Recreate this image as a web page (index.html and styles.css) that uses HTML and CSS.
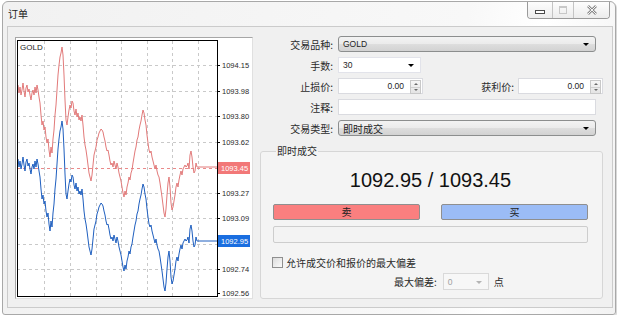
FILE: index.html
```html
<!DOCTYPE html>
<html lang="zh-CN">
<head>
    <meta charset="UTF-8">
    <title>订单</title>
    <link rel="stylesheet" href="styles.css">
</head>
<body>
    <div class="window">
        <div class="titlebar">
            <span class="title">订单</span>
            <div class="caption-buttons">
                <span class="cap-btn cap-min"><i></i></span>
                <span class="cap-btn cap-max"><i></i></span>
                <span class="cap-btn cap-close">
                    <svg width="14" height="10" viewBox="0 0 14 10">
                        <path d="M3 1 L11 9 M11 1 L3 9" stroke="#8a8a8a" stroke-width="2.6" fill="none"/>
                        <path d="M3 1 L11 9 M11 1 L3 9" stroke="#f4f4f4" stroke-width="1" fill="none"/>
                    </svg>
                </span>
            </div>
        </div>

        <div class="client">
            <div class="chart">
                <svg width="236" height="260" viewBox="16 39 236 260">
                    <defs>
                        <clipPath id="plot"><rect x="18" y="42" width="199" height="255"/></clipPath>
                        <polyline id="ticks" fill="none" points="18,160 19,168 20,162 21,170 22,165 23,158 24,166 25,172 26,163 27,160 28,167 29,164 30,170 31,175 32,168 33,165 34,170 35,162 36,168 37,160 38,165 39,172 40,178 41,190 42,200 43,196 44,205 45,202 46,212 47,218 48,214 49,225 50,232 51,222 52,228 53,214 54,205 55,190 56,180 57,165 58,150 59,140 60,132 61,128 62,122 63,130 64,150 65,175 66,195 67,200 68,192 69,185 70,180 71,183 72,176 73,178 74,186 75,190 76,184 77,192 78,188 79,195 80,192 81,196 82,190 83,200 84,212 85,220 86,225 87,232 88,240 89,248 90,252 91,256 92,250 93,240 94,230 95,226 96,222 97,215 98,212 99,208 100,206 101,204 102,205 103,207 104,212 105,216 106,222 107,226 108,225 109,230 110,236 111,240 112,238 113,242 114,236 115,240 116,244 117,238 118,242 119,248 120,252 121,256 122,262 123,268 124,272 125,266 126,270 127,262 128,258 129,252 130,255 131,248 132,245 133,238 134,232 135,226 136,222 137,215 138,212 139,205 140,200 141,196 142,190 143,185 144,188 145,195 146,200 147,210 148,218 149,225 150,228 151,226 152,232 153,236 154,240 155,244 156,240 157,246 158,250 159,252 160,258 161,265 162,272 163,280 164,288 165,292 166,284 167,270 168,258 169,252 170,262 171,278 172,285 173,282 174,276 175,270 176,262 177,258 178,262 179,255 180,250 181,246 182,250 183,244 184,242 185,240 186,242 187,241 188,238 189,244 190,230 191,226 192,232 193,242 194,248 195,246 196,238 197,242 217,242"/>
                    </defs>

                    <rect class="plot-bg" x="17.5" y="41.5" width="200" height="256"/>

                    <g class="grid">
                        <path d="M17 66.5H217 M17 92.5H217 M17 117.5H217 M17 143.5H217 M17 194.5H217 M17 219.5H217 M17 245.5H217 M17 270.5H217"/>
                        <path d="M44.5 42V297 M70.5 42V297 M96.5 42V297 M121.5 42V297 M147.5 42V297 M172.5 42V297 M198.5 42V297"/>
                    </g>
                    <path class="ask-level" d="M17 169.5H217"/>

                    <g clip-path="url(#plot)">
                        <use href="#ticks" class="ask" transform="translate(0 -74)"/>
                        <use href="#ticks" class="bid"/>
                    </g>

                    <rect class="plot-frame" x="17.5" y="41.5" width="200" height="256"/>
                    <path class="axis-ticks" d="M217 66.5h3 M217 92.5h3 M217 117.5h3 M217 143.5h3 M217 194.5h3 M217 219.5h3 M217 270.5h3 M217 294.5h3"/>

                    <text class="symbol" x="20" y="51">GOLD</text>

                    <g class="price-labels">
                        <text x="222" y="69">1094.15</text>
                        <text x="222" y="95">1093.98</text>
                        <text x="222" y="120">1093.80</text>
                        <text x="222" y="146">1093.62</text>
                        <text x="222" y="197">1093.27</text>
                        <text x="222" y="222">1093.09</text>
                        <text x="222" y="273">1092.74</text>
                        <text x="222" y="297">1092.56</text>
                    </g>

                    <rect class="tag-ask" x="218" y="163" width="32" height="12"/>
                    <text class="tag-text" x="221" y="172">1093.45</text>
                    <rect class="tag-bid" x="218" y="236" width="32" height="12"/>
                    <text class="tag-text" x="221" y="245">1092.95</text>
                </svg>
            </div>

            <div class="order">
                <div class="row">
                    <label>交易品种:</label>
                    <div class="combo wide">GOLD<span class="arrow"></span></div>
                </div>
                <div class="row">
                    <label>手数:</label>
                    <div class="combo editable lots">30<span class="arrow"></span></div>
                </div>
                <div class="row">
                    <label>止损价:</label>
                    <div class="spin">0.00<span class="spin-btns"><i class="up"></i><i class="down"></i></span></div>
                    <label class="grow">获利价:</label>
                    <div class="spin">0.00<span class="spin-btns"><i class="up"></i><i class="down"></i></span></div>
                </div>
                <div class="row">
                    <label>注释:</label>
                    <div class="text-input"></div>
                </div>
                <div class="row">
                    <label>交易类型:</label>
                    <div class="combo wide cjk">即时成交<span class="arrow"></span></div>
                </div>

                <fieldset class="market">
                    <legend>即时成交</legend>
                    <div class="quote">1092.95 / 1093.45</div>
                    <div class="trade-buttons">
                        <button class="sell">卖</button>
                        <button class="buy">买</button>
                    </div>
                    <div class="status"></div>
                    <div class="check-row">
                        <span class="checkbox"></span>
                        <span>允许成交价和报价的最大偏差</span>
                    </div>
                    <div class="deviation-row">
                        <label>最大偏差:</label>
                        <div class="combo disabled">0<span class="arrow"></span></div>
                        <span class="unit">点</span>
                    </div>
                </fieldset>
            </div>
        </div>
    </div>
</body>
</html>
```

FILE: styles.css
```css
body {
    margin: 0;
    background: #ffffff;
    font-family: "Liberation Sans", "Noto Sans CJK SC", sans-serif;
    font-size: 10px;
    color: #1e1e1e;
}
.window {
    margin: 1px 4px 0 2px;
    height: 309px;
    border: 1px solid #a8a8a8;
    border-radius: 6px 6px 3px 3px;
    background: linear-gradient(100deg, #f1f1f1 0%, #f8f8f8 70%, #ffffff 82%, #f2f2f2 100%);
    padding: 0 2px 3px 4px;
    box-shadow: 1px 1px 0 #d8d8d8;
}
.titlebar {
    height: 24px;
    display: flex;
    align-items: flex-start;
    justify-content: space-between;
}
.title {
    margin: 6px 0 0 1px;
    font-family: "Noto Sans CJK SC", sans-serif;
    font-size: 10px;
    line-height: 12px;
    color: #222;
}
.caption-buttons {
    display: flex;
    margin-right: 3px;
    border: 1px solid #9a9a9a;
    border-top: none;
    border-radius: 0 0 4px 4px;
    overflow: hidden;
    height: 16px;
}
.cap-btn {
    display: flex;
    align-items: center;
    justify-content: center;
    background: linear-gradient(#fdfdfd, #ececec);
    border-left: 1px solid #c4c4c4;
}
.cap-min {
    width: 24px;
    border-left: none;
}
.cap-min i {
    width: 8px;
    height: 2px;
    border: 1px solid #4a4a4a;
    background: #fff;
    margin-top: 3px;
}
.cap-max {
    width: 20px;
}
.cap-max i {
    width: 6px;
    height: 5px;
    border: 1px solid #c8c8c8;
    border-top-width: 2px;
}
.cap-close {
    width: 35px;
}

.client {
    display: flex;
    height: 270px;
    border: 1px solid #cbcbcb;
    background: #f0f0f0;
    padding: 10px 8px 0 7px;
}
.chart {
    width: 236px;
    height: 260px;
    border: 1px solid #a6a6a6;
    border-right-color: #e0e0e0;
    border-bottom-color: #e0e0e0;
    background: #ffffff;
}
.chart svg {
    display: block;
}
.plot-bg {
    fill: #ffffff;
}
.plot-frame {
    fill: none;
    stroke: #000000;
    stroke-width: 1;
}
.grid path {
    stroke: #c9c9c9;
    stroke-width: 1;
    stroke-dasharray: 3 3;
    fill: none;
}
.ask-level {
    stroke: #ea8a8a;
    stroke-dasharray: 3 3;
}
.axis-ticks {
    stroke: #000;
}
.ask {
    stroke: #e27a7a;
    stroke-width: 1;
}
.bid {
    stroke: #1f5fbf;
    stroke-width: 1;
}
.symbol {
    font-size: 8px;
    fill: #222;
}
.price-labels text {
    font-size: 7.5px;
    fill: #2a2a2a;
}
.tag-ask {
    fill: #f27878;
}
.tag-bid {
    fill: #1a6ee0;
}
.tag-text {
    font-size: 7.5px;
    fill: #ffffff;
}

.order {
    width: 343px;
    margin: -1px 0 0 7px;
    display: flex;
    flex-direction: column;
    gap: 5px;
}
.row {
    display: flex;
    align-items: center;
    height: 16px;
}
.row label {
    width: 73px;
    margin-right: 5px;
    text-align: right;
    font-family: "Noto Sans CJK SC", sans-serif;
    font-size: 10px;
    color: #2a2a2a;
}
.row label.grow {
    flex: 1;
    width: auto;
    margin-right: 4px;
}
.combo {
    position: relative;
    box-sizing: border-box;
    height: 16px;
    display: flex;
    align-items: center;
    padding-left: 4px;
    border: 1px solid #8c8e8e;
    border-radius: 3px;
    background: linear-gradient(#f3f3f3, #ebebeb 50%, #dedede 50%, #d2d2d2);
    font-size: 8.5px;
}
.combo.wide {
    width: 258px;
}
.combo.cjk {
    font-family: "Noto Sans CJK SC", sans-serif;
    font-size: 10px;
}
.arrow {
    position: absolute;
    right: 6px;
    top: 6px;
    border-top: 3px solid #000;
    border-left: 3px solid transparent;
    border-right: 3px solid transparent;
}
.combo.editable {
    width: 83px;
    border-color: #e2e3ea;
    border-radius: 0;
    background: #ffffff;
}
.spin {
    position: relative;
    box-sizing: border-box;
    width: 85px;
    height: 16px;
    display: flex;
    align-items: center;
    justify-content: flex-end;
    padding-right: 18px;
    border: 1px solid #dadbe0;
    background: #ffffff;
    font-size: 8.5px;
}
.spin-btns {
    position: absolute;
    right: 1px;
    top: 1px;
    width: 9px;
    height: 12px;
    display: flex;
    flex-direction: column;
    border: 1px solid #c8c8c8;
    background: linear-gradient(#f6f6f6, #e4e4e4);
}
.spin-btns i {
    flex: 1;
    display: flex;
    justify-content: center;
    align-items: center;
}
.spin-btns i::after {
    content: "";
    border-left: 2px solid transparent;
    border-right: 2px solid transparent;
}
.spin-btns .up::after {
    border-bottom: 2px solid #6a6a6a;
}
.spin-btns .down::after {
    border-top: 2px solid #6a6a6a;
}
.spin-btns .up {
    border-bottom: 1px solid #d0d0d0;
}
.text-input {
    box-sizing: border-box;
    width: 258px;
    height: 16px;
    border: 1px solid #dadbe0;
    background: #ffffff;
}

.market {
    margin: 4px 0 0 0;
    padding: 11px 14px 8px 12px;
    border: 1px solid #d6d6d6;
    border-radius: 3px;
    background: #f4f4f4;
    min-width: 0;
}
.market legend {
    padding: 0 1px;
    margin-left: 3px;
    font-family: "Noto Sans CJK SC", sans-serif;
    font-size: 10px;
    line-height: 12px;
    color: #2a2a2a;
}
.quote {
    text-align: center;
    font-size: 20px;
    line-height: 24px;
    color: #111;
}
.trade-buttons {
    display: flex;
    justify-content: space-between;
    margin-top: 12px;
}
.trade-buttons button {
    width: 147px;
    height: 16px;
    padding: 0;
    border: 1px solid #8f8f8f;
    border-radius: 2px;
    font-family: "Noto Sans CJK SC", sans-serif;
    font-size: 10px;
    line-height: 12px;
    color: #222;
}
.sell {
    background: #fa7f7f;
}
.buy {
    background: #9bbcf6;
}
.status {
    height: 15px;
    margin-top: 6px;
    border: 1px solid #cdcdcd;
    border-radius: 2px;
    background: #f3f3f3;
}
.check-row {
    display: flex;
    align-items: center;
    gap: 3px;
    margin: 13px 0 0 -1px;
    height: 12px;
    font-family: "Noto Sans CJK SC", sans-serif;
    font-size: 10px;
    color: #2a2a2a;
}
.checkbox {
    box-sizing: border-box;
    width: 11px;
    height: 11px;
    border: 1px solid #8f8f8f;
    background: linear-gradient(135deg, #dcdcdc, #fbfbfb);
}
.deviation-row {
    display: flex;
    align-items: center;
    height: 17px;
    margin-top: 5px;
    padding-left: 121px;
    font-family: "Noto Sans CJK SC", sans-serif;
    font-size: 10px;
    color: #2a2a2a;
}
.deviation-row label {
    margin-right: 6px;
}
.combo.disabled {
    width: 46px;
    height: 17px;
    border-color: #d9d9d9;
    border-radius: 0;
    background: #f7f7f7;
    color: #a0a0a0;
    font-family: "Liberation Sans", sans-serif;
    font-size: 8.5px;
}
.combo.disabled .arrow {
    border-top-color: #b4b4b4;
    top: 7px;
}
.unit {
    margin-left: 5px;
}
```
